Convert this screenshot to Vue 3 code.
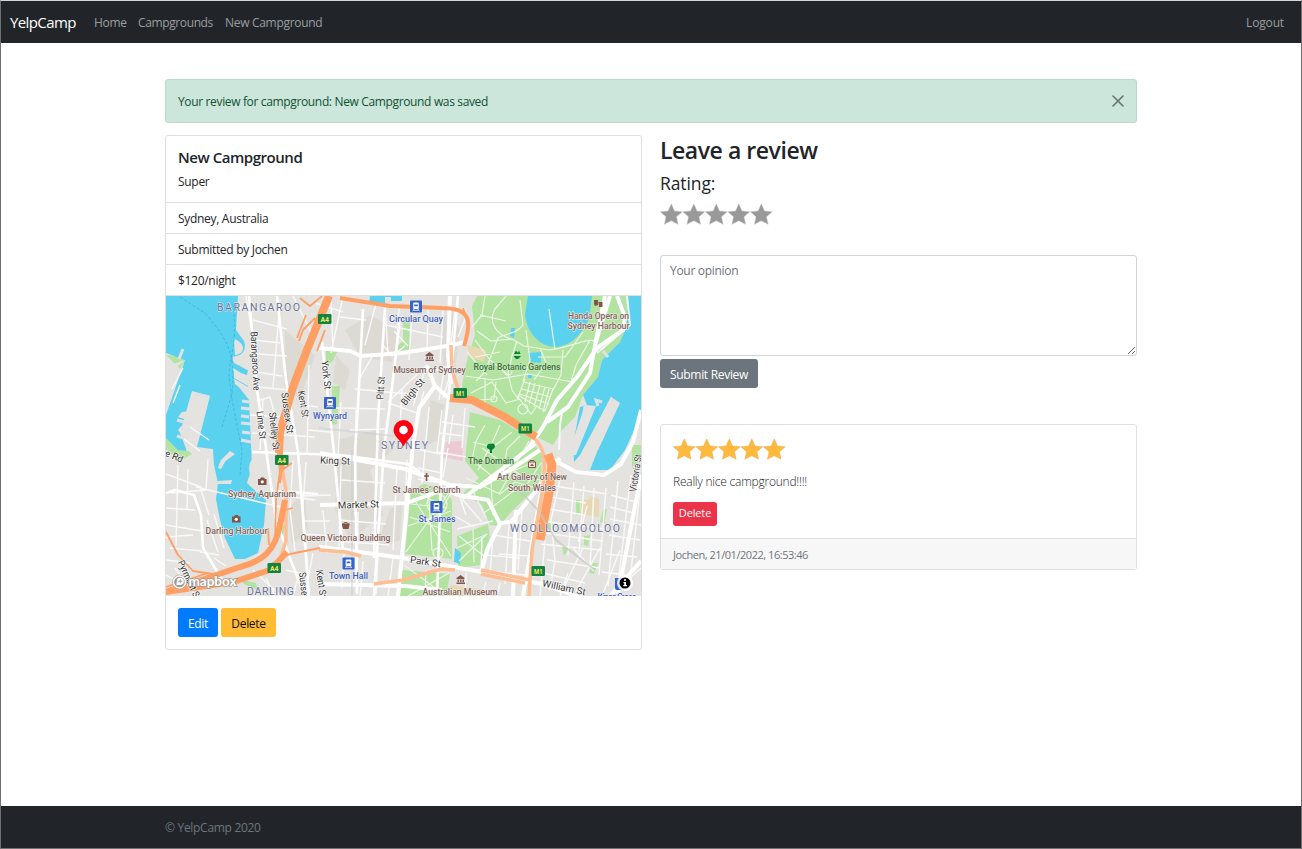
<script setup>
import { ref } from 'vue'

const opinion = ref('')
const facts = ['Sydney, Australia', 'Submitted by Jochen', '$120/night']
const star = 'M11.3 .8 14.5 7.9 22.3 8.7 16.5 13.8 18.1 21.3 11.3 17.8 4.4 21.3 6 13.8 .3 8.7 8.1 7.9Z'

const shields = [
  { t: 'A4', x: 318, y: 314 }, { t: 'A4', x: 275, y: 455 }, { t: 'A4', x: 267.500, y: 563 },
  { t: 'M1', x: 453.500, y: 388 }, { t: 'M1', x: 518.500, y: 423.500 }, { t: 'M1', x: 531.500, y: 566 },
]
const stations = [[410, 300.500], [324, 397], [430.500, 501], [342.500, 557.500]]
/* text, centre x, baseline, width, kind */
const places = [
  ['BARANGAROO', 258.500, 311, 83, 'area'], ['SYDNEY', 404.500, 449, 47, 'area'],
  ['WOOLLOOMOOLOO', 565, 531.500, 110, 'area'], ['DARLING', 270.500, 595, 47, 'area'],
  ['Circular Quay', 416, 322, 54, 'rail'], ['Wynyard', 330, 419, 34, 'rail'],
  ['St James', 437, 522, 37, 'rail'], ['Town Hall', 348.500, 579, 39, 'rail'],
  ['Museum of Sydney', 429.500, 372.500, 72, 'poi'], ['Handa Opera on', 598.500, 318.500, 61, 'poi'],
  ['Sydney Harbour', 598.500, 329, 62, 'poi'], ['St James’ Church', 426.500, 492.500, 68, 'poi'],
  ['Art Gallery of New', 532, 480, 70, 'poi'], ['South Wales', 532, 490.500, 48, 'poi'],
  ['Sydney Aquarium', 262, 496.500, 68, 'poi'], ['Darling Harbour', 236.500, 533.500, 62, 'poi'],
  ['Queen Victoria Building', 345.500, 541, 90, 'poi'], ['Australian Museum', 460, 595, 75, 'poi'],
  ['Royal Botanic Gardens', 517, 370, 87, 'green'], ['The Domain', 491, 464, 46, 'green'],
]
/* text, centre x, centre y, width, rotation */
const streets = [
  ['Barangaroo Ave', 255, 361, 59, 87], ['York St', 326, 375, 29, 84], ['Kent St', 303, 404, 27, 80],
  ['Sussex St', 287, 413, 41, 82], ['Lime St', 261, 425, 28, 84], ['Shelley St', 274, 431, 38, 84],
  ['Pitt St', 381, 388, 23, -86], ['Bligh St', 413, 392, 31, -51], ['King St', 335, 461, 30, 2],
  ['Market St', 358.500, 505, 41, -2], ['Park St', 425.500, 562, 31, 8], ['William St', 564, 588, 44, 12],
  ['Victoria St', 636, 473, 38, -81], ['Pyrmont St', 189, 580, 42, 65], ['Sussex St', 304, 591, 38, 84],
  ['Kent St', 321, 584, 28, 82], ['le Rd', 173, 456, 21, 22],
]
</script>

<template>
  <div class="page">
    <nav class="navbar">
      <a class="brand">YelpCamp</a>
      <a class="link home">Home</a>
      <a class="link camps">Campgrounds</a>
      <a class="link new">New Campground</a>
      <a class="link logout">Logout</a>
    </nav>

    <main class="container">
      <div class="alert">
        <span>Your review for campground: New Campground was saved</span>
        <svg class="close" viewBox="0 0 16 16"><path d="M2.300 2.300 13.700 13.700M13.700 2.300 2.300 13.700" /></svg>
      </div>

      <div class="columns">
        <section class="card camp">
          <div class="intro">
            <h5>New Campground</h5>
            <p>Super</p>
          </div>
          <ul>
            <li v-for="f in facts" :key="f">{{ f }}</li>
          </ul>

          <svg class="map" viewBox="166 296 475 300">
            <rect x="166" y="296" width="475" height="300" fill="#e4e3e0" />
            <g fill="#d8d5cc" opacity=".65">
              <path d="M285 330 315 355 300 400 284 385ZM345 330 370 315 400 332 392 362 360 357ZM338 440 375 430 393 450 370 470 383 515 350 540 335 510ZM390 510 402 500 400 540 375 548ZM288 510 304 490 308 530 292 545ZM336 355 350 370 345 390 333 382ZM440 320 452 310 460 330 455 370 444 372ZM430 400 445 405 438 440 427 445Z" />
            </g>
            <!-- parks -->
            <g fill="#b2e3a0">
              <path d="M477 296H628L626 328 620 342 602 360 598 377 583 395 575 417 562 430 553 445 533 435 500 416 477 405 464 398 462 385 467 360 475 335 472 306Z" />
              <path d="M470 412 500 420 530 438 542 455 541 478 532 492 512 511 499 526 490 525 482 505 463 493 479 478 465 461Z" />
              <path d="M411 491 424 484 445 489 452 500 452 559 405 554ZM402 570 450 574 446 596H400ZM457 536 488 524 490 537 480 565 458 568Z" />
              <path d="M394 350 408 335 411 351ZM326 351 338 350 333 361 326 365ZM403 318 410 316 409 345 403 340ZM332 386 340 386 337 424 332 425ZM166 355 180 356 185 360 180 369ZM166 438 181 445 192 454 180 461 166 449ZM280 526 285 525 283 537 278 538ZM238 579 256 583 258 590 244 584ZM548 522 555 524 552 530 545 528ZM562 546 569 549 564 556ZM584 536 590 535 588 546 584 545ZM603 510 607 509 604 524 600 522ZM593 563 598 563 594 574 589 573ZM576 500 580 500 580 515 576 515ZM632 445H641V460L632 467Z" />
            </g>
            <path d="M467 345 486 350 484 362 470 357ZM581 501 589 499 590 496 599 499 599 517 580 514ZM636 475H641V494H636ZM450 585 486 590V596H449Z" fill="#e9d9b2" />
            <path d="M446 442 462 441 463 461 443 457Z" fill="#edc9d4" />
            <!-- harbour -->
            <g fill="#5bd1f0">
              <path d="M166 296H238L236 330 244 341C247 350 242 356 235 356L234 363 248 370 247 375 234 371V378L248 386 246 390 235 382 249 400 251 445 252 467 247 483 266 500 264 525 258 553 245 559H235L225 538 220 520 216 499 218 483 214 465 213 449 197 447 210 396 192 391 180 433 187 451 178 450 166 438V415L185 360 166 353Z" />
              <path d="M528 296H592L589 319C579 340 566 347 554 347 535 345 526 328 525 314Z" />
              <path d="M628 296H641V415L625 450 610 470 590 470 597 452 620 403 611 397 580 455 574 462 573 445 580 407 587 405 583 395 598 377 602 360 620 342 626 328Z" />
              <path d="M370 296H402V301H391V297H385V303H369ZM528 353 541 352 541 363 531 362ZM511 328 515 328 514 338 510 336ZM528 374H532V378H528ZM455 548 461 553 460 564 454 562ZM480 535 484 537 482 541Z" />
            </g>
            <g fill="#e4e3e0">
              <path d="M166 366 185 360 178 366 166 388ZM193 393 209 397 190 451 186 451 191 425 181 434 178 430 187 420 178 417 182 412 190 411ZM234 339C246 343 246 354 235 355Z" />
              <path d="M233 356 248 365 247 370 233 361ZM233 368 249 378 248 383 234 373ZM234 379 250 388 249 394 235 384ZM230 451 235 454 223 463 220 461ZM220 462 226 460 221 469 218 468ZM218 481 232 480 231 484 217 484Z" />
              <path d="M250 475C247 462 252 456 264 456L270 474 265 499 249 485Z" />
              <path d="M585 405 596 406 576 455 568 455ZM611 397 619 403 598 450 584 451Z" />
            </g>
            <path d="M242 401 249 402M241 408 250 409M241 416 249 417M241 423 251 424M242 432 250 433M241 440 251 442M179 359 183 349M195 394 209 397M177 420 191 424M180 428 189 431M177 436 187 439M602 402 596 400 598 406M585 406 583 420M608 357 603 351" fill="none" stroke="#e0e1e6" stroke-width="3" />
            <path d="M180 297 205 313C230 342 235 355 232 394L222 427M233 304C238 340 230 355 229 376L232 400 242 450 240 475" fill="none" stroke="#36aed5" stroke-width=".7" stroke-dasharray="3 2" />
            <!-- paths -->
            <g class="lane">
              <path d="M485 296 482 315 472 327M506 296 495 309C487 323 498 336 512 339L524 346 549 350C570 348 583 338 596 341M520 300 523 325C516 335 505 333 498 338L485 372 476 381M526 330 530 360 523 381M517 341 512 356 508 373 512 390 519 400M540 348 546 363 534 380M563 350 561 375 553 390M590 340 576 365 571 382 553 409M475 340 490 360 508 375M465 376 493 380 528 374 573 382M471 393 492 382 506 403 520 399M485 378 485 405M496 382 494 399 478 400M525 379 518 397 531 414 537 406M523 382 553 389 545 411 518 395M530 382 525 402M535 383 529 404M540 385 534 407M545 387 539 409M549 389 543 412M522 389 551 397M520 394 549 404M477 331 491 341 512 339M467 352 487 375M549 309 555 350M583 332 565 357 538 357M480 315 506 321M500 352 475 357" />
              <circle cx="494" cy="399" r="3" /><circle cx="523" cy="409" r="5" /><circle cx="508" cy="371" r="4" />
              <path d="M485 425 476 441 472 460 493 477M500 425 492 443 478 470M512 432 493 447 473 442M520 436 507 449 503 475 530 464M482 448 520 475 540 480M466 478 500 494 515 482 533 487M472 489 486 518M491 483 493 515M499 494 529 441M537 452 503 474M519 487 484 513M541 463 524 489" />
              <path d="M413 498 451 556M448 494 406 552M411 504 447 508M408 526 451 511M428 486 432 551M418 492 443 507 451 493M410 517 450 532M404 565 446 596M449 573 408 596M426 570 425 596M457 548 487 534 459 561M459 536 485 557M473 529 474 562" />
              <circle cx="438" cy="553" r="5" /><circle cx="437" cy="504" r="10" />
            </g>
            <!-- local streets -->
            <g class="small">
              <path d="M238 308H275M246 296 250 322 255 348M253 320 287 329M254 340 280 343M257 354 287 356M256 372 282 376M257 387 289 390M263 399 260 450M257 401 270 397 275 415M280 300 273 388M285 405 278 450M250 415 290 417M252 433 315 437" />
              <path d="M293 296 315 340M320 320 305 360M343 296 331 353M331 302 333 350M343 312 315 303M366 320 340 317M376 304 365 345M385 307 388 354M399 308 397 345M413 302 409 360M428 307 427 350M443 311 440 363M386 325 443 337M382 344 392 356 405 346M394 331 408 346M360 378 372 357M355 389 408 394M333 408 385 409M350 430 385 429M356 410 355 515M341 402 338 458M309 365 307 455M300 405 318 407M308 430 330 432M427 365 413 406M444 371 439 400M388 402 427 365M391 404 420 414M402 390 400 428M424 391 415 426M433 371 449 366M454 363 443 398M455 310 449 360M467 314 458 337" />
              <path d="M293 460 290 510 295 551M306 462 303 505 307 560M341 465 340 507 339 550M341 480 385 483M339 520 386 524M321 540 389 545M358 512 357 590M377 472 374 555M397 466 393 550M407 460 403 555M300 496 331 495M302 521 330 521M305 534 332 536M286 496 315 500M323 510 327 553M313 553 305 596M344 552 342 588M363 561 360 596M378 556 376 594M393 558 388 596M286 570 299 573 293 596M266 578 275 596M253 570 281 596" />
              <path d="M417 449 440 454M429 407 422 483M442 410 437 452 466 457M442 422 475 427M440 433 464 436M448 448 443 477M418 468 442 473M418 479 450 485M453 415 449 444M465 408 462 448M458 492 466 515M462 499 482 522M455 516 474 527M457 529 493 521M493 535 530 541M499 554 530 556M482 537 481 570M493 534 490 576M509 524 505 584M522 509 518 570M485 555 520 558M487 571 535 576M466 573 465 596M486 582 482 596M500 583 497 596" />
              <path d="M561 475 551 520 555 560M574 482 568 555M584 486 579 552M594 488 590 568M606 488 599 575M618 481 608 586M631 475 618 583M641 482 630 580M554 486 607 494M551 497 586 503M549 509 585 515M548 522 605 529M544 533 603 541M541 544 601 550M547 560 600 568M543 573 585 583M610 519 641 525M609 535 640 540M606 554 637 557M602 572 626 575M583 548 560 596M600 548 576 591M620 550 602 596M638 563 610 596M545 540 540 596M555 560 550 590M568 573 560 596M630 578 641 568M611 495 636 502M610 507 634 513M587 506 578 542M573 548 594 571" />
              <path d="M166 474 201 487M171 493 206 490M166 508 195 510M178 465 176 546M188 469 187 510M200 487 209 515M166 525 202 531M166 537 193 535M170 548 202 551M166 560 190 563M175 568 196 596M200 552 219 555M214 514 224 548M208 459 206 490M184 439 200 451M190 427 209 440M172 389 183 368M180 385 173 403M207 520 218 552M166 575 187 586M214 558 226 566M196 487 285 508" />
            </g>
            <!-- arterial streets -->
            <g class="road">
              <path d="M277 296 286 380 298 452 309 596M249 296 257 390 267 454M322 342 334 453 343 552M363 309 358 405 355 452 357 594M385 308 378 420 374 558M400 316 394 371 384 450 374 596M458 296 451 374 442 452 437 596M166 493 175 490 194 495 201 515 203 548 221 578M266 450 276 520 291 561 305 596M276 491 318 494M252 452 340 455 408 464 420 472" />
            </g>
            <g class="main">
              <path d="M319 348 350 351 361 356 402 353 447 346 466 342M427 366 435 386 450 399M435 386 419 408 413 445 398 596M320 453 405 469 450 485 480 487 510 470 540 450M320 505 407 503 450 487M319 547 345 550 403 558 488 573 542 584 641 618M319 584 405 586 442 590M458 495 488 500 500 524 487 550 481 573M535 444 506 466 465 497 450 492M500 523 511 522 543 482 560 458M516 510 513 596M541 492 531 549 523 596M552 459 576 472 604 475 621 464 633 442 641 410M641 475 618 594" />
              <path d="M610 296 595 345 590 373 568 407 547 422M617 296 625 317 623 330 597 348 577 377 557 400 543 427 527 450M605 296 595 345" />
              <path d="M450 295 448 355 451 384M641 561 610 596" />
            </g>
            <path d="M627 296 630 325 597 353M562 412 560 425 559 450" fill="none" stroke="#f6f8f5" stroke-width="2" />
            <!-- motorways -->
            <g class="minor-motorway">
              <path d="M534 438C549 451 544 473 542 493L532 550 529 596M451 345 452 370 461 398M282 467 286 490 286 541 279 562M374 584 403 580 441 569 455 570M319 550 346 552 361 556M481 570 530 580M481 574 525 583" />
            </g>
            <g class="motorway">
              <path d="M340 298 390 306 442 308C471 308 472 321 464 346" />
              <path d="M279 453 280 432 293 387 307 350 329 296" stroke-width="8" />
              <path d="M279 445 282 470M285 500 280 525C275 551 263 561 240 567L166 592" stroke-width="6" />
              <path d="M166 592 233 582 270 570 287 552" stroke-width="6" />
              <path d="M450 398 472 400 505 417 536 437" stroke-width="8" />
              <path d="M548 454 552 465 549 493 540 540" stroke-width="9" />
              <path d="M166 532 178 555 193 571 220 575M269 545 268 528M277 524 282 520M300 298 310 306 322 296M324 300 317 320 304 350M297 338 306 315M299 341 303 330 315 318M325 330 317 351M280 483 282 470 292 463M285 510 293 508M320 548 290 554 269 565M463 308 469 328M166 587 208 573M280 470 276 500 275 545" stroke-width="1.800" />
            </g>
            <path d="M514 485 538 510 556 540 595 570" fill="none" stroke="#c8c7bf" stroke-width="2" opacity=".7" />
            <path d="M319 428 414 438M352 450 352 596" fill="none" stroke="#c9c9d2" stroke-width="2" opacity=".45" />

            <g v-for="(s, i) in shields" :key="'s' + i">
              <rect :x="s.x" :y="s.y" width="13.500" height="10" rx="1.200" fill="#128442" />
              <text class="shield" :x="s.x + 6.75" :y="s.y + 7.700" textLength="8.500" lengthAdjust="spacingAndGlyphs">{{ s.t }}</text>
            </g>
            <g v-for="([x, y], i) in stations" :key="'t' + i" :transform="`translate(${x} ${y})`">
              <rect width="12" height="12" rx="1" fill="#3764cb" />
              <rect x="3.200" y="2" width="5.600" height="6.500" rx="1" fill="#fff" />
              <path d="M4.200 4H7.800V5.800H4.200Z" fill="#3764cb" />
              <path d="M4 8.500 2.800 10.500M8 8.500 9.200 10.500M3.500 9.700H8.500" stroke="#fff" stroke-width=".8" />
            </g>
            <!-- place symbols -->
            <g fill="#80564a">
              <path id="museum" d="M425.500 355 429.500 352 433.500 355V356H425.500ZM426.500 356.500H428V359H426.500ZM429 356.500H430.500V359H429ZM431.500 356.500H433V359H431.500ZM425.500 359.500H434V361H425.500Z" />
              <use href="#museum" x="31" y="223" />
              <path d="M425.700 473H427.300V475.300H429V476.800H427.300V481H425.700V476.800H424V475.300H425.700Z" />
              <path d="M342 523.500H349.500V525L348.500 529H343L342 525Z" />
              <path d="M258 479H260L261 477.500H264L265 479H266.500V485H258ZM232 516.500H234L235 515H238L239 516.500H240.500V522.500H232Z" />
              <path d="M594 300H598V305L595 306 594 304ZM598.500 302H602.500V307H599Z" />
            </g>
            <path d="M343.500 524 344.500 522.500H347L348 524" fill="none" stroke="#80564a" stroke-width=".8" />
            <g fill="#fff"><circle cx="262.300" cy="481.800" r="1.600" /><circle cx="236.300" cy="519.300" r="1.600" /></g>
            <path d="M528.500 462H535.500V467.500H528.500ZM530 462V460.500H534V462" fill="#f3e6e1" stroke="#80564a" />
            <path d="M530 466 532 463.500 534 466Z" fill="#80564a" />
            <g fill="#078133">
              <path d="M487 448C486 445 489 443 491 444 494 442 497 447 493 449L492 450V453H490V450ZM514 354 516 350.500 518 353 519 350.500 520.500 354ZM513.500 356H521L518 359H516Z" />
            </g>

            <text v-for="([t, x, y, w, k], i) in places" :key="'p' + i" :class="['label', k]" :x="x" :y="y" :textLength="w" :lengthAdjust="k === 'area' ? 'spacing' : 'spacingAndGlyphs'">{{ t }}</text>
            <text v-for="([t, x, y, w, r], i) in streets" :key="'r' + i" class="label street" :transform="`translate(${x} ${y}) rotate(${r})`" y="3" :textLength="w" lengthAdjust="spacingAndGlyphs">{{ t }}</text>
            <text class="label rail" x="617" y="600" textLength="39">Kings Cross</text>

            <!-- marker -->
            <path d="M403.500 446.500C400 439.500 393.500 436 393.500 430A10 10 0 0 1 413.500 430C413.500 436 407 439.500 403.500 446.500Z" fill="#ff0013" />
            <circle cx="403.500" cy="430" r="4.300" fill="#fff" />

            <!-- attribution -->
            <circle cx="179.500" cy="582" r="7" fill="#fff" stroke="#a09b99" stroke-width=".6" />
            <circle cx="179.500" cy="582" r="5.300" fill="#9c9795" />
            <circle cx="180.300" cy="581.300" r="3.500" fill="#fff" /><path d="M176.300 585.200 177 580 182 584.600Z" fill="#fff" />
            <path d="M180.300 578.800 181 580.600 182.800 581.300 181 582 180.300 583.800 179.600 582 177.800 581.300 179.600 580.600Z" fill="#aaa19d" />
            <text class="mapbox" x="188.500" y="586" textLength="48" lengthAdjust="spacingAndGlyphs">mapbox</text>
            <path d="M615 578H624V590H617Q615 590 615 588Z" fill="#3764cb" />
            <circle cx="625" cy="583" r="8" fill="#fff" opacity=".85" />
            <circle cx="625" cy="583" r="5.500" fill="#000" />
            <circle cx="625" cy="580" r="1.100" fill="#fff" />
            <path d="M623.500 582H626V585H627V586.300H623.300V585H624.200V583.200H623.500Z" fill="#fff" />
          </svg>

          <div class="actions">
            <button class="btn edit">Edit</button>
            <button class="btn remove">Delete</button>
          </div>
        </section>

        <section class="reviews">
          <h2>Leave a review</h2>
          <div class="rating">Rating:</div>
          <svg class="stars grey" viewBox="0 0 113 22">
            <path v-for="n in 5" :key="n" :d="star" :transform="`translate(${(n - 1) * 22.5} 0)`" />
          </svg>
          <textarea v-model="opinion" placeholder="Your opinion"></textarea>
          <button class="btn submit">Submit Review</button>

          <article class="card review">
            <div class="review-body">
              <svg class="stars gold" viewBox="0 0 113 22">
                <path v-for="n in 5" :key="n" :d="star" :transform="`translate(${(n - 1) * 22.5} 0)`" />
              </svg>
              <p>Really nice campground!!!!</p>
              <button class="btn tiny">Delete</button>
            </div>
            <footer>Jochen, 21/01/2022, 16:53:46</footer>
          </article>
        </section>
      </div>
    </main>

    <footer class="bottom"><span>© YelpCamp 2020</span></footer>
  </div>
</template>

<style>
body { margin: 0; background: #fff; }
</style>

<style scoped>
* { box-sizing: border-box; }
.page {
  width: 1302px; height: 849px; display: flex; flex-direction: column;
  border: 1px solid #707070; border-top-color: #d5d8d8;
  font-family: "Open Sans", "Noto Sans", sans-serif; font-size: 12px; line-height: 18px;
  color: #212529; overflow: hidden; letter-spacing: -.3px;
}
.navbar { height: 42px; flex: none; background: #212529; display: flex; align-items: center; padding: 2px 17px 0 9px; }
.brand { color: #fff; font-size: 15px; width: 84px; letter-spacing: -.6px; margin-top: -2px; }
.link { color: #9b9d9f; white-space: nowrap; }
.home { width: 44px; }
.camps { width: 87px; letter-spacing: -.38px; }
.logout { margin-left: auto; letter-spacing: -.15px; }
.container { width: 972px; margin: 36px 0 0 164px; flex: 1; }
.alert {
  height: 44px; padding: 1px 12px 0; border: 1px solid #badbcc; border-radius: 3px; background: #cde6db;
  color: #0f5132; display: flex; align-items: center; justify-content: space-between; letter-spacing: -.35px;
}
.close { width: 14px; height: 14px; margin-top: -2px; margin-right: -1px; }
.close path { stroke: #66736e; stroke-width: 1.900; stroke-linecap: round; }
.columns { display: grid; grid-template-columns: 477px 477px; gap: 18px; margin-top: 12px; align-items: start; }
.card { border: 1px solid #dfdfdf; border-radius: 3px; background: #fff; }
.camp { height: 515px; }
.intro { height: 66px; padding: 11px 12px; }
h5 { margin: 0; font-size: 15px; line-height: 20px; font-weight: 600; letter-spacing: -.46px; }
p { margin: 0; }
.intro p { margin-top: 6px; }
ul { list-style: none; margin: 0; padding: 0; }
li { height: 31px; border-top: 1px solid #dfdfdf; padding: 7px 12px 0; }
li:last-child { height: 32px; border-bottom: 1px solid #dfdfdf; }
.map { display: block; width: 475px; height: 300px; }
.actions { padding: 12px; display: flex; gap: 3px; }
.btn {
  border: 0; border-radius: 3px; height: 29px; padding: 2px 0 0; font: inherit; letter-spacing: inherit;
  color: #fff; display: block; white-space: nowrap;
}
.edit { width: 40px; background: #007bff; }
.remove { width: 55px; background: #ffbc34; color: #111; }
.reviews { display: flex; flex-direction: column; align-items: flex-start; }
h2 { margin: 0; font-size: 23px; line-height: 30px; font-weight: 600; letter-spacing: -.45px; }
.rating { font-size: 17.500px; line-height: 24px; margin-top: 6px; letter-spacing: -.1px; }
.stars { display: block; width: 113px; height: 22px; }
.grey { margin-top: 8px; fill: #999; stroke: #c8c8c8; stroke-width: .5; }
.gold { fill: #ffb93d; stroke: #dba850; stroke-width: .4; }
textarea {
  width: 477px; height: 101px; margin-top: 30px; padding: 6px 9px; border: 1px solid #ced4da; border-radius: 3px;
  font: inherit; letter-spacing: inherit; outline: none; resize: vertical; display: block;
}
textarea::placeholder { color: #6c757d; opacity: 1; }
.submit { width: 98px; margin-top: 3px; background: #6c757d; }
.review { width: 477px; height: 146px; margin-top: 36px; }
.review-body { height: 113px; padding: 12px; }
.review-body .gold { margin-top: 1px; }
.review-body p { margin-top: 13px; font-weight: 300; letter-spacing: -.23px; }
.tiny { width: 44px; height: 24px; padding: 0 0 2px; font-size: 11px; margin-top: 11px; background: #eb3349; letter-spacing: -.15px; }
.review footer { height: 31px; padding: 7px 12px 0; border-top: 1px solid #dfdfdf; background: #f7f7f7; color: #6c757d; font-size: 11px; letter-spacing: -.46px; }
.bottom { height: 42px; flex: none; background: #212529; color: #6c757d; padding: 13px 0 0 164px; }

.lane, .small, .road, .main, .motorway, .minor-motorway { fill: none; stroke-linejoin: round; }
.lane { stroke: #edf5e8; stroke-width: 1.200; }
.small { stroke: #f9f9fa; stroke-width: 1.400; }
.road { stroke: #fff; stroke-width: 2.600; }
.main { stroke: #fff; stroke-width: 4; }
.motorway { stroke: #ff9f64; stroke-width: 4; }
.minor-motorway { stroke: #ffbd94; stroke-width: 3.500; }
.label {
  font: 500 9px Roboto, "Noto Sans", sans-serif; letter-spacing: 0; text-anchor: middle;
  paint-order: stroke; stroke: #f4f1ef; stroke-width: 1.200px; stroke-linejoin: round;
}
.area { font-size: 10.500px; font-weight: 400; fill: #68739c; stroke-width: .8px; }
.rail { fill: #3c5fbd; }
.poi { fill: #80635b; }
.green { fill: #417044; stroke: #c5e8b9; }
.street { font-size: 9.800px; font-weight: 400; fill: #333; stroke: #fff; }
.shield { font: 700 7.500px Roboto, sans-serif; letter-spacing: 0; text-anchor: middle; fill: #f7e65f; }
.mapbox { font: 700 13px Lato, sans-serif; letter-spacing: 0; fill: #fff; paint-order: stroke; stroke: #a09b99; stroke-width: 1.500px; }
</style>
